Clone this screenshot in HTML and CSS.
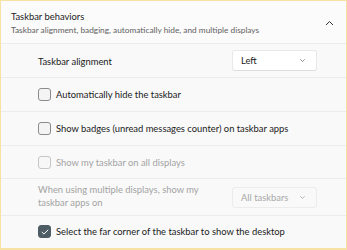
FILE: index.html
```html
<!DOCTYPE html>
<html>
<head>
<meta charset="utf-8">
<link rel="stylesheet" href="styles.css">
</head>
<body>
<div class="frame">
  <div class="panel">
    <div class="header">
      <div class="htext">
        <div class="title">Taskbar behaviors</div>
        <div class="subtitle">Taskbar alignment, badging, automatically hide, and multiple displays</div>
      </div>
      <svg class="chev" width="9" height="6" viewBox="0 0 9 6"><path d="M1 5 L4.5 1.5 L8 5" fill="none" stroke="#333" stroke-width="1"/></svg>
    </div>
    <div class="row r1">
      <span class="label">Taskbar alignment</span>
      <div class="select"><span>Left</span><svg width="5" height="3" viewBox="0 0 5 3"><path d="M0.3 0.3 L2.5 2.5 L4.7 0.3" fill="none" stroke="#777" stroke-width="0.8"/></svg></div>
    </div>
    <div class="row r2">
      <span class="box"></span><span class="label">Automatically hide the taskbar</span>
    </div>
    <div class="row r3">
      <span class="box"></span><span class="label">Show badges (unread messages counter) on taskbar apps</span>
    </div>
    <div class="row r4 disabled">
      <span class="box"></span><span class="label">Show my taskbar on all displays</span>
    </div>
    <div class="row r5 disabled">
      <span class="label two">When using multiple displays, show my taskbar apps on</span>
      <div class="select"><span>All taskbars</span><svg width="5" height="3" viewBox="0 0 5 3"><path d="M0.3 0.3 L2.5 2.5 L4.7 0.3" fill="none" stroke="#aaa" stroke-width="0.8"/></svg></div>
    </div>
    <div class="row r6">
      <span class="box checked"><svg width="8" height="6" viewBox="0 0 8 6"><path d="M0.8 3 L2.9 5 L7.2 0.8" fill="none" stroke="#fff" stroke-width="1"/></svg></span><span class="label">Select the far corner of the taskbar to show the desktop</span>
    </div>
  </div>
</div>
</body>
</html>
```
FILE: styles.css
```css
html, body {
  margin: 0;
  padding: 0;
  background: #ffffff;
}
body {
  font-family: "Lato", "Noto Sans", sans-serif;
  color: #1b1b1b;
}
.frame {
  width: 347px;
  height: 250px;
  box-sizing: border-box;
  border: 1px solid #f7e1a3;
  border-bottom-width: 2px;
  background: #f9f9f9;
  overflow: hidden;
}
.panel {
  display: flex;
  flex-direction: column;
}
.header {
  height: 43px;
  box-sizing: border-box;
  background: #fbfbfb;
  border-bottom: 1px solid #ececec;
  display: flex;
  align-items: center;
  padding: 0 12px 0 10px;
}
.htext {
  flex: 1;
  display: flex;
  flex-direction: column;
  gap: 2px;
  margin-top: 1px;
}
.title {
  font-size: 9.4px;
  line-height: 13px;
  color: #1b1b1b;
}
.subtitle {
  font-size: 8.3px;
  line-height: 11px;
  color: #616161;
}
.chev {
  margin-top: 2px;
}
.row {
  display: flex;
  align-items: center;
  padding: 0 29px 0 37px;
  border-bottom: 1px solid #ececec;
  font-size: 9.4px;
  color: #1b1b1b;
}
.r1 { height: 33px; justify-content: space-between; }
.r1 .label { margin-top: 2px; }
.r2 { height: 33px; }
.r3 { height: 33px; }
.r4 { height: 32px; }
.r5 { height: 37px; justify-content: space-between; padding-bottom: 2px; box-sizing: border-box; }
.r6 { height: 31px; border-bottom: none; }
.label { line-height: 13px; }
.two { width: 165px; }
.box {
  width: 13px;
  height: 13px;
  box-sizing: border-box;
  border: 1px solid #8b8b8b;
  border-radius: 3px;
  background: #f4f4f4;
  margin-right: 5px;
  display: flex;
  align-items: center;
  justify-content: center;
  flex: none;
}
.box.checked {
  background: #4e5c66;
  border-color: #4e5c66;
}
.disabled { color: #a3a3a3; }
.disabled .box { border-color: #c6c6c6; background: #f7f7f7; }
.select {
  width: 85px;
  height: 21px;
  box-sizing: border-box;
  background: #ffffff;
  border: 1px solid #e8e8e8;
  border-bottom-color: #dcdcdc;
  border-radius: 3px;
  display: flex;
  align-items: center;
  justify-content: space-between;
  padding: 0 11px 0 8px;
  font-size: 9.4px;
}
.r5 .select { margin-top: 2px; }
.disabled .select {
  background: #f9f9f9;
  border-color: #ececec;
  color: #a8a8a8;
}
```
